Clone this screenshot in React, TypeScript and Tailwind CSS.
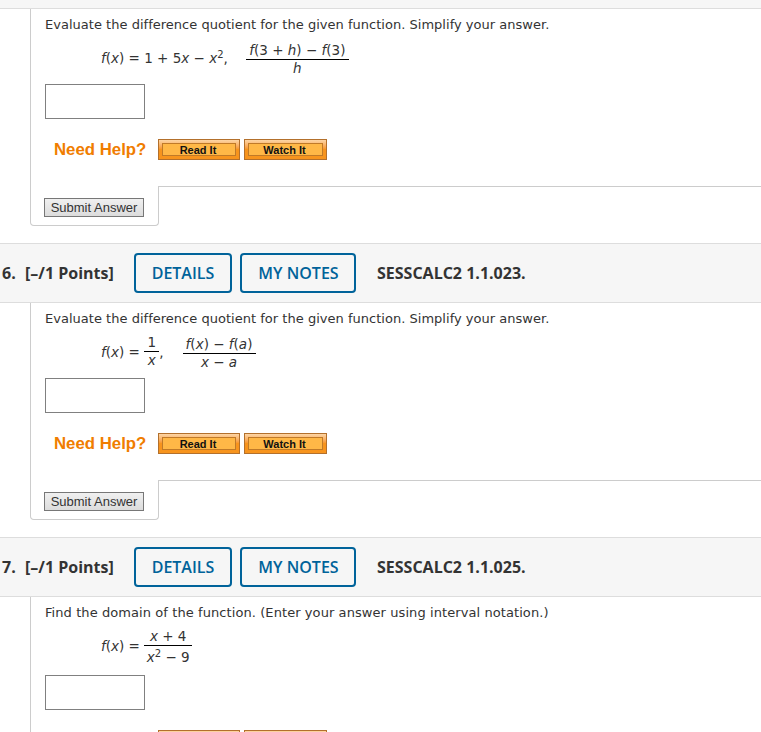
import type { ReactNode } from 'react';

// Fraction with a rule between numerator and denominator
function Frac({ top, bottom, w, tall }: { top: ReactNode; bottom: ReactNode; w: string; tall?: boolean }) {
  return (
    <span className={`inline-flex flex-col items-center ${w}`}>
      <span className="w-full text-center leading-[17px] h-[18px] border-b border-black whitespace-pre">{top}</span>
      <span className={`w-full text-center whitespace-pre ${tall ? 'leading-[22px]' : 'leading-[17px]'}`}>{bottom}</span>
    </span>
  );
}

const I = ({ children }: { children: ReactNode }) => <i className="italic">{children}</i>;

function HelpButton({ label, width }: { label: string; width: string }) {
  return (
    <button className={`${width} block h-[21px] p-[3px] border border-[#b3702c] bg-gradient-to-b from-[#fcd5a4] via-[#f7941d] to-[#f7941d]`}>
      <span className="flex h-full w-full items-center justify-center border border-[#c07a28] bg-[#ffb847] pt-[1px] pr-[2px] font-['Liberation_Sans',sans-serif] text-[11px] font-bold text-[#111]">
        {label}
      </span>
    </button>
  );
}

function Answer() {
  return <div className="h-[35px] w-[100px] border border-[#808080] bg-white" />;
}

function Help() {
  return (
    <div className="mt-5 ml-[9px] flex h-[21px] items-center">
      <span className="w-[104px] font-['Liberation_Sans',sans-serif] text-[16.8px] font-bold text-[#f07d00]">Need Help?</span>
      <div className="flex gap-1">
        <HelpButton label="Read It" width="w-[82px]" />
        <HelpButton label="Watch It" width="w-[83px]" />
      </div>
    </div>
  );
}

function SubmitRow() {
  return (
    <div className="flex">
      <div className="h-[40px] w-[129px] rounded-b border-b border-l border-r border-[#ccc] pt-3 pl-[13px]">
        <button className="block h-[19px] w-[100px] border border-[#777] bg-gradient-to-b from-[#f0f0f0] to-[#dcdcdc] font-['Liberation_Sans',sans-serif] text-[13px] leading-none text-[#333]">
          Submit Answer
        </button>
      </div>
      <div className="flex-1 border-t border-[#ccc]" />
    </div>
  );
}

function Header({ num, code }: { num: string; code: string }) {
  return (
    <div className="flex h-[60px] items-center border-y border-[#ddd] bg-[#f6f6f6] font-['Open_Sans',sans-serif] text-[16px] text-[#333]">
      <span className="w-[25px] pl-[2px] font-bold">{num}</span>
      <span className="w-[109px] font-bold">[–/1 Points]</span>
      <button className="h-[40px] w-[98px] rounded border-2 border-[#00639a] font-semibold text-[#00639a]">DETAILS</button>
      <button className="ml-2 h-[40px] w-[116px] rounded border-2 border-[#00639a] pl-[1px] font-semibold text-[#00639a]">MY NOTES</button>
      <span className="ml-[21px] font-bold">{code}</span>
    </div>
  );
}

function Prompt({ children, wide }: { children: ReactNode; wide?: boolean }) {
  return (
    <p className={`h-[30px] pt-[7px] text-[13px] leading-[18px] text-[#333] ${wide ? 'tracking-[0.08px]' : 'tracking-[0.02px]'}`}>
      {children}
    </p>
  );
}

export default function App() {
  return (
    <div className="h-[732px] overflow-hidden bg-white font-['DejaVu_Sans',sans-serif]">
      <div className="h-[9px] border-b border-[#ddd] bg-[#f6f6f6]" />

      {/* question 5 */}
      <div className="ml-[30px]">
        <div className="h-[177px] border-l border-[#ccc] pl-[14px]">
          <Prompt>Evaluate the difference quotient for the given function. Simplify your answer.</Prompt>
          <div className="ml-[56px] flex h-[45px] items-start pt-[1px] text-[13.5px] text-[#333]">
            <span className="mt-[9px] whitespace-pre leading-[18px]"><I>f</I>(<I>x</I>) = 1 + 5<I>x</I> − <I>x</I><sup className="text-[10px]">2</sup>,</span>
            <span className="ml-[18px]">
              <Frac w="w-[103px]" top={<><I>f</I>(3 + <I>h</I>) − <I>f</I>(3)</>} bottom={<I>h</I>} />
            </span>
          </div>
          <Answer />
          <Help />
        </div>
        <SubmitRow />
      </div>

      <div className="h-[17px]" />
      <Header num="6." code="SESSCALC2 1.1.023." />

      {/* question 6 */}
      <div className="ml-[30px]">
        <div className="h-[177px] border-l border-[#ccc] pl-[14px]">
          <Prompt>Evaluate the difference quotient for the given function. Simplify your answer.</Prompt>
          <div className="ml-[56px] flex h-[45px] items-start pt-[1px] text-[13.5px] text-[#333]">
            <span className="mt-[9px] whitespace-pre leading-[18px]"><I>f</I>(<I>x</I>) = </span>
            <Frac w="w-[15px]" top="1" bottom={<I>x</I>} />
            <span className="mt-[9px] leading-[18px]">,</span>
            <span className="ml-[19px]">
              <Frac w="w-[73px]" top={<><I>f</I>(<I>x</I>) − <I>f</I>(<I>a</I>)</>} bottom={<><I>x</I> − <I>a</I></>} />
            </span>
          </div>
          <Answer />
          <Help />
        </div>
        <SubmitRow />
      </div>

      <div className="h-[17px]" />
      <Header num="7." code="SESSCALC2 1.1.025." />

      {/* question 7 */}
      <div className="ml-[30px]">
        <div className="h-[180px] border-l border-[#ccc] pl-[14px]">
          <Prompt wide>Find the domain of the function. (Enter your answer using interval notation.)</Prompt>
          <div className="ml-[56px] flex h-[48px] items-start pt-[1px] text-[13.5px] text-[#333]">
            <span className="mt-[9px] whitespace-pre leading-[18px]"><I>f</I>(<I>x</I>) = </span>
            <Frac w="w-[48px]" tall top={<><I>x</I> + 4</>} bottom={<><I>x</I><sup className="text-[10px]">2</sup> − 9</>} />
          </div>
          <Answer />
          <Help />
        </div>
      </div>
    </div>
  );
}
